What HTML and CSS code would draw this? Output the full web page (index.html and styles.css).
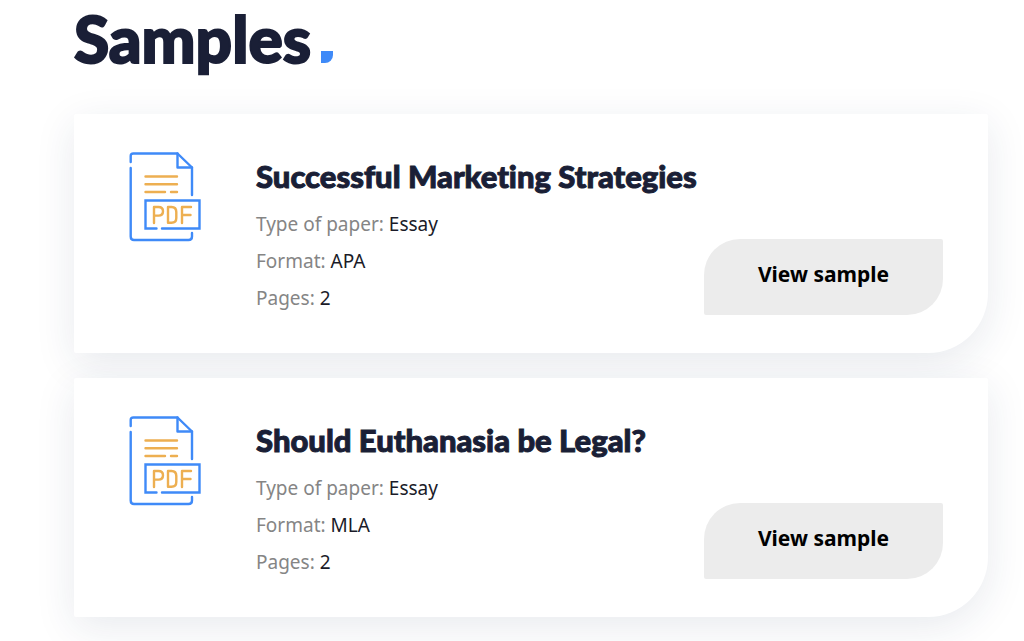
FILE: index.html
```html
<!DOCTYPE html>
<html lang="en">
<head>
  <meta charset="UTF-8">
  <meta name="viewport" content="width=device-width, initial-scale=1.0">
  <title>Samples</title>
  <link rel="stylesheet" href="styles.css">
</head>
<body>

<!-- PDF icon, used by every card -->
<svg class="sprite" aria-hidden="true">
  <symbol id="icon-pdf" viewBox="0 0 72 90">
    <g fill="none" stroke="#3f8af8" stroke-width="2.4" stroke-linecap="round" stroke-linejoin="round">
      <path d="M1.700 10V4Q1.700 1.500 4.400 1.500H48.500L63 15.500V43"/>
      <path d="M48.500 1.500V15.500H63"/>
      <path d="M1.700 16V84.500Q1.700 88 5 88H59.500Q63 88 63 84.500V81"/>
      <path d="M27.500 76.500H16.500V48.500H70.500V76.500H33" stroke-linejoin="miter"/>
    </g>
    <g fill="none" stroke="#edaf51" stroke-width="2.400" stroke-linecap="round" stroke-linejoin="round">
      <path d="M16.500 24.500H48M16.500 32.200H48M16.500 40H36M42 40H48"/>
      <path d="M25 71V55H29.500Q34 55 34 59.300Q34 63.600 29.500 63.600H25"/>
      <path d="M39 55H42.500Q47.300 55 47.300 60V66Q47.300 70.700 42.500 70.700H39Z"/>
      <path d="M53 71V55H62M53 63H61.500"/>
    </g>
  </symbol>
</svg>

<main class="samples">
  <h1 class="samples-title">Samples<span class="dot"></span></h1>

  <div class="samples-list">
    <article class="card">
      <svg class="card-icon" aria-hidden="true"><use href="#icon-pdf"/></svg>
      <div class="card-info">
        <h2 class="card-title">Successful Marketing Strategies</h2>
        <ul class="card-details">
          <li>Type of paper: <span>Essay</span></li>
          <li>Format: <span>APA</span></li>
          <li>Pages: <span>2</span></li>
        </ul>
      </div>
      <button type="button" class="btn">View sample</button>
    </article>

    <article class="card">
      <svg class="card-icon" aria-hidden="true"><use href="#icon-pdf"/></svg>
      <div class="card-info">
        <h2 class="card-title">Should Euthanasia be Legal?</h2>
        <ul class="card-details">
          <li>Type of paper: <span>Essay</span></li>
          <li>Format: <span>MLA</span></li>
          <li>Pages: <span>2</span></li>
        </ul>
      </div>
      <button type="button" class="btn">View sample</button>
    </article>
  </div>
</main>

</body>
</html>
```
FILE: styles.css
```css
* {
  box-sizing: border-box;
}

body {
  margin: 0;
  background: #fff;
  color: #1a1f36;
  font-family: "Noto Sans", sans-serif;
  overflow-x: hidden;
}

.sprite {
  display: none;
}

.samples {
  padding: 0 36px 24px 74px;
}

.samples-title {
  margin: 0;
  padding-bottom: 36px;
  font-family: Lato, sans-serif;
  font-size: 64px;
  font-weight: 900;
  line-height: 78px;
  -webkit-text-stroke: 2px #1a1f36;
}

.dot {
  display: inline-block;
  width: 12px;
  height: 12px;
  margin-left: 10px;
  border-radius: 0 0 8px 0;
  background: #3f8af8;
}

.samples-list {
  display: flex;
  flex-direction: column;
  gap: 25px;
}

.card {
  display: flex;
  align-items: flex-start;
  padding: 38px 45px 36px 55px;
  border-radius: 2px 2px 60px 2px;
  background: #fff;
  box-shadow: 0 10px 40px rgba(30, 45, 85, 0.1);
}

.card-icon {
  flex: none;
  width: 72px;
  height: 90px;
  margin-right: 55px;
}

.card-info {
  flex: 1;
  min-width: 0;
}

.card-title {
  margin: 0 0 6px;
  font-family: Lato, sans-serif;
  font-size: 31px;
  font-weight: 900;
  font-variant-ligatures: none;
  line-height: 48px;
  white-space: nowrap;
  -webkit-text-stroke: 1px #1a1f36;
}

.card-details {
  margin: 0;
  padding: 0;
  list-style: none;
  color: #858585;
  font-size: 19px;
  line-height: 37px;
}

.card-details span {
  color: #1a1b28;
}

.btn {
  flex: none;
  align-self: flex-end;
  width: 239px;
  height: 76px;
  margin-bottom: 2px;
  padding: 0 0 6px;
  border: none;
  border-radius: 36px 2px 36px 2px;
  background: #ececec;
  color: #000;
  font-family: "Noto Sans", sans-serif;
  font-size: 21px;
  font-weight: 700;
  cursor: pointer;
}

.btn:hover {
  background: #e2e2e2;
}

@media (max-width: 800px) {
  .samples {
    padding: 0 20px 24px;
  }

  .card {
    flex-wrap: wrap;
    padding: 24px;
  }

  .card-icon {
    margin-right: 24px;
  }

  .card-title {
    white-space: normal;
  }
}
```
